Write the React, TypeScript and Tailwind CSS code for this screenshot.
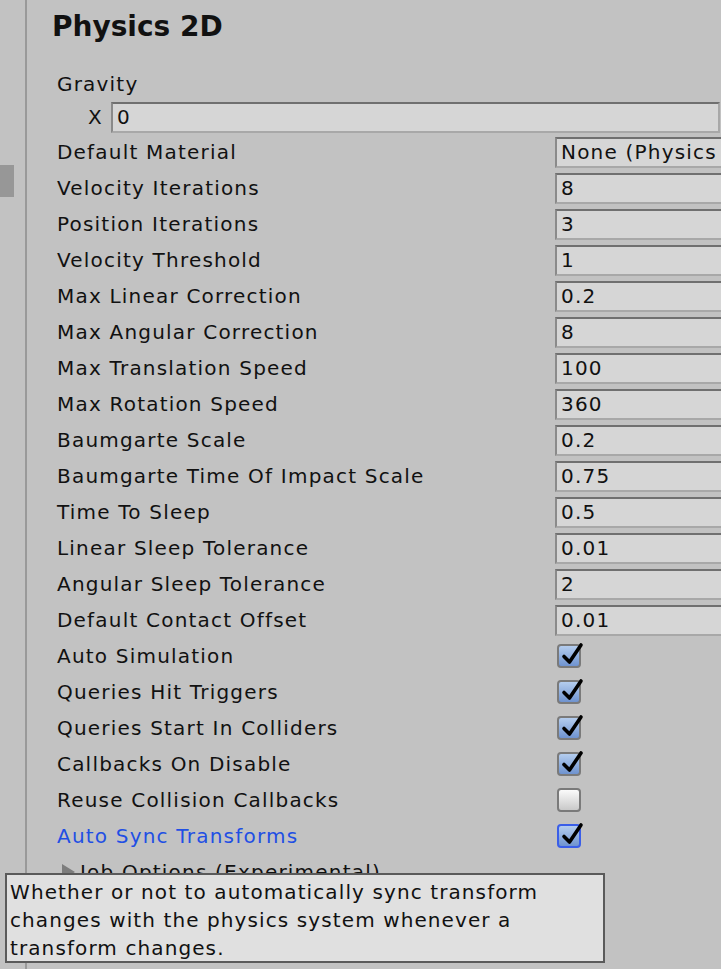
const numberRows: [string, string][] = [
  ['Default Material', 'None (Physics Material 2D)'],
  ['Velocity Iterations', '8'],
  ['Position Iterations', '3'],
  ['Velocity Threshold', '1'],
  ['Max Linear Correction', '0.2'],
  ['Max Angular Correction', '8'],
  ['Max Translation Speed', '100'],
  ['Max Rotation Speed', '360'],
  ['Baumgarte Scale', '0.2'],
  ['Baumgarte Time Of Impact Scale', '0.75'],
  ['Time To Sleep', '0.5'],
  ['Linear Sleep Tolerance', '0.01'],
  ['Angular Sleep Tolerance', '2'],
  ['Default Contact Offset', '0.01'],
];

const toggleRows: [string, boolean][] = [
  ['Auto Simulation', true],
  ['Queries Hit Triggers', true],
  ['Queries Start In Colliders', true],
  ['Callbacks On Disable', true],
  ['Reuse Collision Callbacks', false],
];

function Field({ value, className = '' }: { value: string; className?: string }) {
  return (
    <div
      className={`h-[31px] flex items-center pl-[4px] whitespace-nowrap overflow-hidden bg-[#d6d6d6] border-2 border-t-[#707070] border-l-[#8a8a8a] border-r-[#a8a8a8] border-b-[#a8a8a8] ${className}`}
    >
      {value}
    </div>
  );
}

function Check({ on, focused = false }: { on: boolean; focused?: boolean }) {
  const frame = focused ? 'border-[#3a5ee8]' : 'border-[#7a7a7a]';
  const fill = on
    ? 'bg-gradient-to-b from-[#b4cdee] to-[#6f93cf]'
    : 'bg-gradient-to-b from-[#fbfbfb] to-[#c9c9c9]';
  return (
    <div className={`ml-[2px] w-[24px] h-[24px] rounded-[4px] border-2 ${frame} ${fill} relative`}>
      {on && (
        <svg viewBox="0 0 24 24" className="absolute left-[1px] top-[-5px] w-[24px] h-[26px]">
          <path d="M4 14.5 L9.5 20 L21 3" fill="none" stroke="#000" strokeWidth="3.6" strokeLinecap="round" strokeLinejoin="round" />
        </svg>
      )}
    </div>
  );
}

export default function App() {
  return (
    <div
      className="w-[721px] h-[969px] bg-[#c2c2c2] text-[#111] text-[20px] relative overflow-hidden flex"
      style={{ fontFamily: '"DejaVu Sans", Verdana, sans-serif' }}
    >
      <div className="w-[27px] shrink-0 border-r-2 border-[#999999] pt-[165px]">
        <div className="w-[14px] h-[32px] bg-[#979797]" />
      </div>

      <div className="flex-1 min-w-0 pl-[25px]">
        <h2 className="text-[28px] font-bold leading-none pt-[13px] h-[68px] text-[#111]">Physics 2D</h2>

        <div className="pl-[5px] tracking-[1.2px]">
          <div className="h-[32px] flex items-center">Gravity</div>
          <div className="h-[34px] flex items-center">
            <span className="w-[54px] text-right pr-[8px]">X</span>
            <Field value="0" className="w-[609px] shrink-0" />
          </div>

          {numberRows.map(([label, value]) => (
            <div key={label} className="h-[36px] flex items-center">
              <span className="w-[498px] shrink-0 whitespace-nowrap">{label}</span>
              <Field value={value} className="w-[200px] shrink-0" />
            </div>
          ))}

          {toggleRows.map(([label, on]) => (
            <div key={label} className="h-[36px] flex items-center">
              <span className="w-[498px] shrink-0 whitespace-nowrap">{label}</span>
              <Check on={on} />
            </div>
          ))}

          <div className="h-[36px] flex items-center">
            <span className="w-[498px] shrink-0 whitespace-nowrap text-[#1f4fe4]">Auto Sync Transforms</span>
            <Check on focused />
          </div>

          <div className="h-[36px] flex items-center pl-[5px]">
            <span className="w-0 h-0 border-y-[8px] border-y-transparent border-l-[13px] border-l-[#7d7d7d] mr-[5px]" />
            <span className="whitespace-nowrap">Job Options (Experimental)</span>
          </div>
        </div>
      </div>

      <div className="absolute left-[5px] top-[873px] w-[600px] h-[90px] bg-[#e0e0e0] border-2 border-[#5a5a5a] pl-[3px] pt-[3px] leading-[28px] tracking-[1.1px] text-[#111] whitespace-nowrap">
        Whether or not to automatically sync transform
        <br />
        changes with the physics system whenever a
        <br />
        transform changes.
      </div>
    </div>
  );
}
